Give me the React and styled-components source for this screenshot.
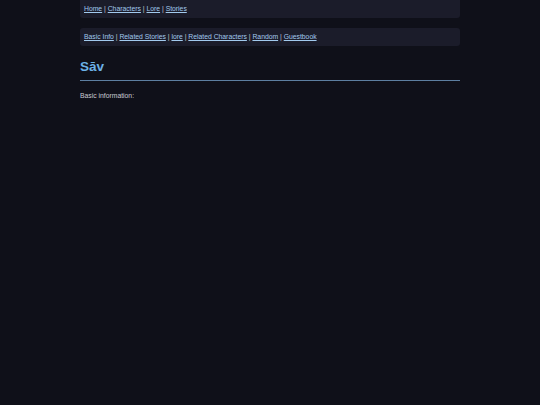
import styled, { createGlobalStyle } from 'styled-components'

const Global = createGlobalStyle`
  html, body {
    margin: 0;
    padding: 0;
    background: #0f1019;
  }
  body {
    font-family: "Liberation Sans", Arial, sans-serif;
    color: #c9cad3;
  }
`

const Page = styled.div`
  width: 380px;
  margin: 0 auto;
  min-height: 405px;
`

const NavBar = styled.nav`
  background: #1b1c2a;
  border-radius: ${(p) => (p.top ? '0 0 3px 3px' : '3px')};
  padding: 5px 4px;
  margin-bottom: ${(p) => (p.top ? '10px' : '0')};
  font-size: 6.8px;
  line-height: 8px;
  color: #c9cad3;
`

const NavLink = styled.a`
  color: #a2caee;
  text-decoration: underline;
`

const Title = styled.h1`
  margin: 12px 0 0;
  font-size: 13.5px;
  line-height: 18px;
  font-weight: bold;
  color: #6cb1e6;
  padding-bottom: 4px;
  border-bottom: 1.5px solid #5d7fa1;
`

const Text = styled.p`
  margin: 11px 0 0;
  font-size: 6.8px;
  line-height: 8px;
  color: #c9cad3;
`

const Links = ({ items }) =>
  items.map((item, i) => (
    <span key={item}>
      {i > 0 && ' | '}
      <NavLink href="#">{item}</NavLink>
    </span>
  ))

export default function App() {
  return (
    <>
      <Global />
      <Page>
        <NavBar top>
          <Links items={['Home', 'Characters', 'Lore', 'Stories']} />
        </NavBar>
        <NavBar>
          <Links
            items={['Basic Info', 'Related Stories', 'lore', 'Related Characters', 'Random', 'Guestbook']}
          />
        </NavBar>
        <Title>Sāv</Title>
        <Text>Basic information:</Text>
      </Page>
    </>
  )
}
